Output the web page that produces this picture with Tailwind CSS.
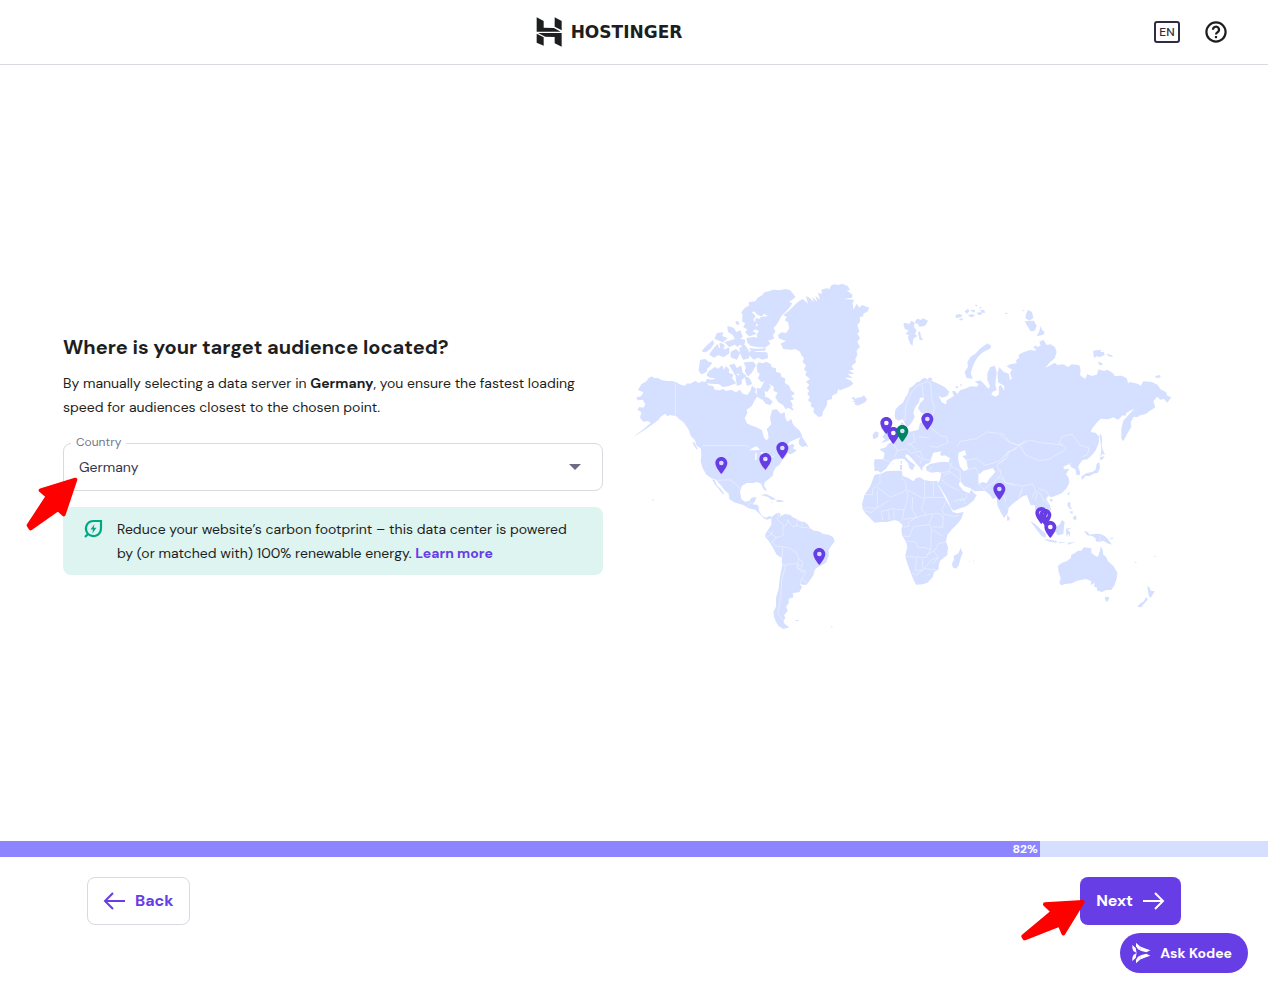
<!DOCTYPE html>
<html lang="en">

<head>
    <meta charset="UTF-8" />
    <meta name="viewport" content="width=device-width, initial-scale=1.0" />
    <title>Hostinger - Server location</title>
    <script src="https://cdn.jsdelivr.net/npm/@tailwindcss/browser@4"></script>
</head>

<body class="min-h-screen flex flex-col bg-white text-[#1d1e20] font-['DM_Sans',Inter,sans-serif]">
    <header class="flex items-center h-[65px] pl-16 pr-10 border-b border-[#d8dae0]">
        <a href="#" class="flex-1 flex items-center justify-center gap-2" aria-label="Hostinger">
            <svg class="w-[27px] h-[30px]" viewBox="0 0 81 90" fill="#1d1e20">
                <path d="M2 1l21 11v20l31 1 20 11H2z" />
                <path d="M56 1l21 11v28L56 29z" />
                <path d="M2 50l21 11v25L2 77z" />
                <path d="M6 48h71v41L56 79V60l-28-1z" />
            </svg>
            <span class="font-['DejaVu_Sans'] font-bold text-[17px] leading-6">HOSTINGER</span>
        </a>
        <div class="flex items-center gap-6">
            <button class="flex items-center justify-center w-[26px] h-[22px] border-2 border-[#2f2b43] rounded-[3px] text-xs font-medium leading-none text-[#2f2b43]">EN</button>
            <button aria-label="Help">
                <svg class="w-6 h-6" viewBox="0 0 24 24" fill="none" stroke="#1d1e20" stroke-width="2.200">
                    <circle cx="12" cy="12" r="9.600" />
                    <path d="M9 9.800a3 3 0 1 1 4.600 2.400c-1 .7-1.600 1.200-1.600 2.300" />
                    <path d="M12 16v2.200" />
                </svg>
            </button>
        </div>
    </header>

    <main class="flex-1 grid grid-cols-[54fr_55fr] items-center gap-[27px] pt-1 pl-[63px] pr-[88px]">
        <section>
            <h1 class="text-xl leading-6 font-bold mb-3">Where is your target audience located?</h1>
            <p class="text-sm leading-6 mb-6">By manually selecting a data server in <b>Germany</b>, you ensure the fastest loading speed for audiences closest to the chosen point.</p>

            <div class="relative mb-4">
                <label for="country" class="absolute -top-[9px] left-2 px-[5px] bg-white text-xs leading-4 text-[#727586]">Country</label>
                <select id="country" class="appearance-none w-full h-12 px-[15px] border border-[#d8dae0] rounded-lg bg-transparent text-sm text-[#36344d]">
                    <option>Germany</option>
                    <option>France</option>
                    <option>India</option>
                    <option>United States</option>
                </select>
                <svg class="absolute right-[22px] top-[21px] w-3 h-[6px] pointer-events-none" viewBox="0 0 12 6" fill="#6d6c82"><path d="M0 0h12L6 6z" /></svg>
                <svg class="absolute z-10 -left-[37px] top-[34px] w-[52px] h-[54px]" viewBox="18 456 156 162" fill="#f00" stroke="#f00" stroke-width="12" stroke-linejoin="round">
                    <path d="M166 464L62 496l21 18-57 87 6 9 82-58 17 16z" />
                </svg>
            </div>

            <div class="flex gap-3.5 py-2.5 pl-5 pr-5 rounded-lg bg-[#def4f0]">
                <svg class="shrink-0 w-5 h-6" viewBox="0 0 20 24" fill="none" stroke="#00a884" stroke-width="2.200">
                    <path d="M2 20l3-3C1 12 3 4 11 4h7v7c0 8-8 10-13 6" />
                    <path d="M11.500 7L7.500 12.500h2.500L9.300 16.500l4.200-5.700h-2.800z" fill="#00a884" stroke="none" />
                </svg>
                <p class="text-sm leading-6">Reduce your website’s carbon footprint – this data center is powered by (or matched with) 100% renewable energy. <a href="#" class="font-bold text-[#673de6]">Learn more</a></p>
            </div>
        </section>

        <svg class="w-full" viewBox="0 0 1650 1080" role="img" aria-label="Data center locations">
            <defs>
                <path id="pin" fill-rule="evenodd" d="M0-51c-10 0-18 8-18 18 0 13 18 33 18 33s18-20 18-33c0-10-8-18-18-18zm0 11a7 7 0 1 1 0 14 7 7 0 0 1 0-14z" />
            </defs>

            <!-- North America, Greenland, Iceland -->
            <g fill="#d5dfff">
                <path d="M18 368L34 363 40 352 24 345 34 328 50 318 56 309 66 304 72 309 84 309 94 315 110 318 126 318 140 322 148 328 164 332 172 325 180 326 196 318 206 324 216 319 228 322 236 331 250 334 254 344 268 346 280 342 288 348 304 344 318 352 330 344 338 356 352 360 362 346 366 332 378 342 376 352 384 362 374 376 366 392 350 404 352 414 344 430 352 446 366 452 378 456 396 466 402 488 410 496 416 488 414 474 410 462 424 448 420 430 426 406 440 402 452 416 464 412 466 428 472 440 484 432 488 446 496 456 508 466 516 480 514 486 498 492 480 500 470 514 488 506 494 512 488 520 500 526 490 534 480 538 472 534 466 546 456 556 448 570 438 576 430 590 428 602 416 612 404 622 402 632 410 644 406 648 398 638 394 626 380 621 370 624 350 624 336 632 330 650 334 672 344 680 358 678 364 668 380 666 374 680 368 688 384 690 388 710 396 722 408 728 420 722 426 730 418 732 410 734 400 728 388 716 376 704 356 700 340 690 312 682 298 672 296 656 284 646 270 628 258 614 242 608 228 598 218 580 212 560 214 540 212 520 200 512 194 494 182 482 176 464 168 452 158 440 150 434 140 424 120 420 112 424 106 416 94 424 84 436 68 448 48 462 20 480 12 484 38 464 62 444 54 438 40 440 30 428 34 412 22 404 28 396 40 398 46 388 38 374 24 376z" />
                <path d="M246 613l8 2 6 16 12 10 11 17-5-1-14-18-8-8z" />
                <path d="M506 498l8-16 6 10 10 14 4 10-8-3-8 3-10-6z" />
                <path d="M186 500l8 4 10 20-7-4-6-10z" />
                <path d="M444 180L454 172 468 174 478 160 474 142 464 136 470 126 460 120 476 108 488 96 500 84 508 78 518 72 534 86 528 64 536 66 552 82 546 66 562 80 556 62 570 74 564 54 576 56 574 44 590 40 600 42 602 32 612 28 626 30 636 26 654 34 660 46 650 46 668 60 666 68 640 72 672 74 668 84 670 104 680 86 688 98 696 90 718 98 712 110 700 116 700 124 690 126 690 140 682 150 688 170 682 176 690 190 682 200 690 216 680 226 682 240 676 252 678 262 664 274 672 284 656 286 674 298 652 296 668 308 644 308 664 318 670 326 656 336 630 346 624 342 622 354 606 362 606 372 592 376 590 392 580 408 576 424 566 426 550 412 552 400 542 394 544 384 534 376 540 366 532 356 538 348 530 340 538 330 528 320 540 312 526 300 530 290 522 284 528 270 518 262 522 250 514 240 510 230 496 222 484 224 460 222 452 206 468 198 446 190z" />
                <path d="M664 370l8-5 4 7 6-4 14-2 5-5 5 5 5 8-6 8-12 6-10 4-10-5 3-5-9-2 7-4z" />
                <path d="M392 660l16-3 14 7 16 9-12 2-12-9z" />
                <path d="M440 674l12 1 12 5-12 1-12 0z" />
                <path d="M422 680l8 2-6 1z" />
                <path d="M68 672l4 3-2 3-3-2z" />
            </g>

            <!-- Canadian Arctic islands -->
            <g fill="#d5dfff" stroke="#d5dfff" stroke-width="4" stroke-linejoin="round">
                <path d="M382 272L386 264 400 267 408 262 420 268 424 278 436 282 436 292 450 296 452 306 464 312 462 324 476 334 480 346 492 356 480 362 490 372 478 374 486 390 482 394 488 404 474 396 468 400 460 388 446 380 438 366 446 352 432 346 434 334 420 326 408 322 404 314 396 320 386 310 392 296 384 290z" />
                <path d="M212 256L226 254 234 262 244 264 238 272 230 280 228 290 214 296 208 286z" />
                <path d="M238 290L256 278 264 284 276 274 280 290 288 276 296 284 294 294 308 300 304 310 316 324 300 330 280 334 268 326 244 324 228 322 232 314 248 316 262 308 240 306 232 300z" />
                <path d="M300 272l12-4 8 14 12-8 4 20 10 8-10 10-8-8 2-12-14 6-8-14z" />
                <path d="M344 264l24-2 8 8-12 22-10 10-8-14 4-10z" />
                <path d="M318 300l14 6 2 20-12 4z" />
                <path d="M346 306l10 4 8 16-12 4z" />
                <path d="M218 228L232 212 248 198 250 206 240 220 226 230z" />
                <path d="M240 238L250 224 262 210 266 222 276 218 282 226 296 220 296 234 280 244 264 238 252 246z" />
                <path d="M256 190l6-14 16-2-4 10 16 6-12 10z" />
                <path d="M270 206l10 2 2 8-10 0z" />
                <path d="M286 202l18-4 8 10-14 6z" />
                <path d="M294 156l16 4 8 14 12-6 6 18-18 8-8-16-14-8z" />
                <path d="M306 196l20-4 18 4-4 18-10-8-8 8z" />
                <path d="M304 232l14-8 10 10-8 18-16-6z" />
                <path d="M330 220l14-8 10 14 2 22-16 4-8-18z" />
                <path d="M352 190L374 188 392 194 412 196 418 206 404 216 380 214 362 210 354 202z" />
                <path d="M360 222l20 1 26-1-2 3-30 2z" />
                <path d="M356 236L364 228 376 232 410 234 412 248 396 252 384 246 372 252z" />
                <path d="M340 120L336 112 346 100 360 92 358 84 378 80 384 70 398 62 404 54 420 50 430 46 450 48 466 44 480 48 494 66 484 74 474 78 484 86 476 98 466 108 454 120 446 134 438 148 428 158 434 170 426 180 430 190 410 196 384 190 382 178 390 168 376 160 388 150 378 140 378 132 396 134 392 128 412 126 422 110 412 120 400 114 396 122 384 118 372 106 362 112 374 122 370 132 360 128 378 146 374 152 382 158 364 168 376 176 358 182 348 172 354 162 342 156 348 144 338 138z" />
                <path d="M382 340l10 4 14-26 14 16-8 14-12-2 4 14-8 12-12-8z" />
                <path d="M402 366l12 4 12 10-6 8-12-4-8-10z" />
                <path d="M319 140l6 2 0 6-6-3z" />
            </g>

            <!-- South America -->
            <g fill="#d5dfff" transform="translate(0 465)">
                <path d="M424 262L436 252 446 248 452 252 450 260 464 252 480 254 488 262 498 266 510 274 524 276 534 284 542 296 552 302 566 304 580 312 596 314 610 322 614 334 602 350 596 360 596 378 588 398 574 406 560 414 554 420 550 436 540 450 530 464 516 464 508 458 516 472 508 486 488 490 490 502 476 506 476 520 468 530 473 542 462 556 466 564 460 572 464 582 478 592 460 597 446 588 438 576 432 560 430 546 438 530 438 504 446 476 450 440 456 410 456 384 440 374 428 352 416 332 406 322 406 312 414 300 424 284z" />
                <path d="M498 570l10-1-4 4-8 0z" />
                <path d="M602 588l7 3-4 2z" />
            </g>

            <!-- Europe and Asia -->
            <g fill="#d5dfff">
                <path d="M794 420L796 404 806 392 818 384 826 368 834 356 838 340 850 332 860 322 868 320 876 312 886 308 892 314 898 307 908 311 904 317 922 325 945 337 958 350 952 363 936 368 925 362 932 374 935 382 948 388 950 376 960 370 972 363 966 349 974 347 982 357 990 346 1005 341 1022 334 1040 335 1046 328 1034 320 1050 316 1060 325 1075 341 1080 334 1072 315 1072 295 1080 277 1094 272 1100 290 1096 330 1100 346 1088 350 1084 359 1098 365 1107 357 1106 335 1112 330 1124 348 1122 332 1104 322 1102 295 1108 277 1120 290 1136 296 1140 315 1146 311 1140 294 1146 284 1130 274 1140 268 1160 265 1158 256 1168 248 1165 240 1180 232 1200 225 1216 227 1222 216 1232 212 1228 200 1240 194 1250 210 1262 208 1275 217 1280 232 1274 250 1260 262 1246 279 1262 270 1275 263 1282 270 1300 268 1314 276 1325 268 1348 271 1352 284 1350 300 1358 307 1366 311 1372 297 1385 303 1400 299 1406 283 1422 288 1432 284 1448 294 1455 303 1475 302 1490 310 1494 325 1500 321 1525 327 1532 333 1540 319 1565 321 1582 329 1592 343 1608 352 1612 362 1624 367 1612 383 1602 372 1590 374 1582 365 1570 379 1576 397 1555 411 1548 417 1530 421 1522 427 1512 425 1502 441 1504 456 1490 479 1480 499 1474 491 1474 460 1480 437 1496 419 1513 401 1500 407 1490 413 1486 423 1478 421 1464 434 1450 427 1435 433 1412 431 1400 443 1386 461 1382 471 1396 473 1408 485 1406 505 1396 528 1386 540 1372 553 1358 555 1350 565 1344 575 1350 590 1350 599 1340 601 1336 583 1324 577 1318 567 1300 575 1302 583 1318 581 1308 597 1316 609 1318 622 1310 640 1295 655 1276 662 1265 667 1254 663 1248 673 1260 690 1263 705 1250 719 1240 705 1230 695 1222 702 1228 722 1236 732 1242 747 1232 738 1222 718 1216 704 1214 690 1202 691 1196 675 1190 660 1180 663 1170 670 1150 685 1136 698 1133 715 1122 729 1112 712 1102 690 1100 667 1088 672 1080 660 1065 647 1035 649 1020 639 1004 634 990 619 986 629 1000 647 1018 655 1024 643 1032 655 1040 661 1030 677 1010 693 970 707 962 697 958 685 945 660 928 633 922 627 930 615 934 595 925 590 905 593 890 587 888 575 900 567 930 561 956 561 960 550 945 541 934 543 930 535 936 529 922 531 910 533 904 549 900 563 888 567 878 577 876 589 868 575 860 567 848 553 836 541 828 537 826 545 838 557 856 571 852 575 848 585 838 579 834 565 822 551 800 551 788 555 778 567 768 581 752 593 744 587 734 589 732 565 734 553 760 553 764 535 748 523 768 517 774 507 790 499 805 485 810 470 808 455 815 440 822 447 820 463 840 470 865 464 870 445 880 439 876 425 905 417 888 419 873 413 864 400 870 385 882 373 880 367 870 369 866 383 854 399 850 415 854 425 846 441 835 455 828 452 818 432 806 437 796 431z" />
                <path d="M838 581l12-2-2 7zM810 570l6 0 0 14-6 0zM812 558l4 0-1 9-4-2z" />
            </g>
            <g fill="#d5dfff" transform="translate(660 45)">
                <path d="M95 392l11 6-5 13 12 18 9 10-4 12-25 9 12-12-8-8 8-10-12-14z" />
                <path d="M68 436l8-12 10 4-2 14-14 6z" />
                <path d="M160 102L164 98 178 102 184 92 194 98 192 110 200 122 194 132 202 138 190 146 187 168 180 160 174 144 176 134 166 132 176 122 164 116z" />
                <path d="M196 92l6-6 12 4 4-6 16 8-4 8-6 8-16 2-4-8-8-2z" />
                <path d="M204 128l6-4 3 16 6 10-10 0z" />
                <path d="M412 160L424 168 420 176 400 186 386 198 376 212 368 230 362 250 368 266 350 264 344 246 354 230 352 216 362 200 378 190 388 178z" />
                <path d="M316 76l12-4 10 4-6 6-14 2zM326 88l14-4-4 8zM344 64l10-8 4 8-8 8zM354 76l12-4 10 6-14 4zM360 60l16 0-4 8zM374 44l8 0-2 6zM380 68l14-2 2 8-12 0zM390 60l12 0 4 8-10 0zM386 56l6-6 4 4z" />
                <path d="M466 68l8 1-4 4zM316 288l10 2-6 6zM330 284l6-2-2 8z" />
            </g>
            <g fill="#d5dfff" transform="translate(1110 75)">
                <path d="M84 30l12 6 4 18-12 8-12-8 2-12z" />
                <path d="M74 64l28-2 8 16-6 14-12 2-10-16z" />
                <path d="M122 78l4 12 8 6-4 8-20 5 8-16z" />
                <path d="M280 152l10-1 14-2-3 8 10-2 3 10-14 6-12-2-4 6-4-10z" />
                <path d="M318 161l16 4 6 6-14-2zM294 185l12 4 2 6-10 0zM466 229l10-4 7 3-5 5-12 0zM66 30l8 1-3 3zM14 39l8 0-4 3z" />
                <path d="M299 402l5 2 2 14-1 22 10 25-8-4-6 10 3-22z" />
                <path d="M300 472l14-4-6 10-8 2zM290 492l8-6 0 24-8 0z" />
                <path d="M100 144l6-8 6 4 0 8z" />
            </g>

            <!-- Africa, Madagascar, Sri Lanka -->
            <g fill="#d5dfff" transform="translate(660 495)">
                <path d="M74 104L92 101 110 94 134 92 155 92 158 108 175 114 190 124 198 114 210 112 222 120 244 124 262 122 264 136 276 156 286 176 300 200 308 216 322 220 341 216 334 236 322 252 306 268 292 284 288 304 294 322 292 345 270 362 266 376 266 388 252 396 248 412 232 428 218 433 198 434 190 418 180 392 168 358 166 346 172 320 168 305 156 286 154 268 158 256 146 244 134 240 112 246 90 246 74 248 58 232 46 220 38 208 36 192 40 178 44 164 60 140 68 120z" />
                <path d="M332 324l6 16-6 14-6 22-8 10-10-4-2-12 6-10-1-12 14-8z" />
                <path d="M472 225l7 10-1 6-7 1z" />
                <path d="M357 363l4 0-2 3zM368 361l3 0-1 4z" />
            </g>

            <!-- South-east Asia and Oceania -->
            <g fill="#d5dfff" transform="translate(1110 495)">
                <path d="M291 72l6-4 3 12-6 18-16 4-8 6-14 0-10 12-2-10 14-10 18-4 10-6z" />
                <path d="M204 158l5-2-2 10-4-2zM150 178l8-1-2 8-6-2zM203 188l8-2 0 14 6 8-8-2-6-8zM210 214l8 0 0 8-6-2zM218 232l10-6 2 12-8 2z" />
                <path d="M166 262l12-8 8-14 8 6-2 14-2 22-16 4-8-10z" />
                <path d="M91 244l14 7 16 16 16 14 0 12-12-4-12-16-14-18z" />
                <path d="M136 297l14 2 20 4 0 5-18-2-16-5zM176 306l22 1-20 3zM204 308l22-2-22 8z" />
                <path d="M198 266l18-3-14 8 8 4 0 16-6-10-4 10-2-16z" />
                <path d="M252 274L264 276 268 284 280 282 300 281 314 288 324 298 336 314 322 310 310 302 298 306 288 304 286 294 276 288 262 286z" />
                <path d="M328 296l14-4-6 6zM402 364l10 6-6-1zM460 350l8-3-2 4z" />
                <path d="M174 378L186 368 200 364 212 354 214 344 224 340 234 332 244 332 252 322 274 325 274 338 286 348 294 350 300 332 302 319 308 330 310 344 318 350 324 364 340 378 352 398 350 416 344 434 334 450 318 450 306 456 292 452 290 442 282 440 284 428 272 436 274 424 258 417 230 422 216 430 196 432 184 436 178 430 182 414 176 396z" />
                <path d="M314 470l14 2-4 11-6 2z" />
                <path d="M442 437l8 8 2 7 12 2-6 10-7 10-5-8-2-14z" />
                <path d="M438 471l6 7-12 13-8 11-12-2 8-9 12-8z" />
            </g>

            <!-- lakes, inland seas -->
            <g fill="#fff">
                <path d="M358 526l10-8 12-4 10 10-10 2-14 0zM376 536l4-4 0 20-5 6zM392 530l14 4-8 12-4-6zM404 554l14-6-8 8zM424 546l12-6-8 7z" />
                <path d="M986 533L1005 525 1009 541 997 543 1010 557 1014 583 1002 589 990 575 984 553z" />
                <path d="M1045 600L1060 587 1088 579 1096 591 1078 611 1070 625 1058 621 1046 627z" />
            </g>

            <!-- country borders -->
            <g fill="none" stroke="#eef2ff" stroke-width="2" stroke-linejoin="round">
                <path d="M136 322V424l14 10 10 6 14 22M216 511H344l14 6M258 616l22-1 20 0 18 12 14 16M352 694l8-10 10 0M384 704l8-12" />
                <g transform="translate(0 465)">
                    <path d="M446 252l-4 18 18 12-2 22 2 12-20 8-28-22M460 292l14-14-2-10 16 22 16-4 8 6 28 2M502 268l-2 20M516 276v14M410 320l12-4 8-14M440 318l-14 20 14 12 18 0 20 4 22 14 6 18 12 10-2 16-14-10-26 0-16 6-8-18M458 352l-2 34M468 404l-12 40-4 60-8 46 14 20M506 386l-4 26 26 14-12 20 16 14M516 446l-6 14M500 412l16 14 12-2" />
                </g>
                <g transform="translate(660 45)">
                    <path d="M164 395l4-50 16-38 18-20 30-12 10 4M216 284l4 38M242 280l4 50 8 24-10 30M220 382l4 24 26 12 22 20 18 2 4 18-34 14-20-4M190 430l4 24-26 14M208 440l30 4M322 470l8-16 50-8 30-20 34 4 30 24 30 12 26-16" />
                </g>
                <g transform="translate(1110 75)">
                    <path d="M0 400l10 2 20 26 30 8 30-16 30 8 60 6 10-4M60 436l16 28 40 18 30-4 50-28 0-10-20-8 10-22 30-8 24 34 28 8-6 20-16 6M60 436l-34 20-6 20-26 16" />
                </g>
                <g transform="translate(660 495)">
                    <path d="M100 58l34 14M128 10l16 22 24-6 16 14 26-6 12 24 24 4M142 30l-8 20M176 8l24 22M196 44l20 12-6 16M236 92l10-10M292 66l20 18 18 8 2 34M268 100l30-6 6-26M276 120l22 18 30 14M280 108l22-12 30 26M310 184l30-8 6 16M350 160l0 14-20 8M352 88l26-4 8 20 0 28 16 16M402 148l30-22 20-20 0-18M350 60l30-4 26 20 40-12 24-24 30-14M456 106l10 22 30 10M468 186l-10-30" />
                    <path d="M44 164h24l0-16 22-20 0-26M82 142l40 30 46-20 0-24-14-14M82 150v54H40M82 204l-20 14-22-8M82 204l36-24M98 240l-4-26 34-8 34 4 10-30 0-28M132 236l0-26M118 240l-4-28M162 210l-6 34M172 150l52 28V122M224 172h66M224 178l-10 30 16 16 34-4 14 10M188 172l-2 34 14 26-40 6M160 262l16-4 0-12 24-14M250 124v48M288 184l-12 24 4 14 34 8 12-4M248 224l-10 26 6 18 34 20M280 228l-2 34-30-2M200 232l30-8M190 260l-12 30-20-2M190 260l48-6M174 304h20l12 20 14-2 22 6 2-60M166 350l50 2 14 0 12-24M200 352l-4 40 24-2 26-32 20-4M218 356v28M228 344l26-12 12-22 26-4M250 332l14 20-14 20M186 400l14 4 24-18 20 2 14 0M230 408l10-6" />
                </g>
                <g transform="translate(1110 495)">
                    <path d="M-4 110l22 18 50 10 30-6 8 20-10 20M68 140l-8 26M106 152l16 10 10 22 14 10M110 160l-4 24M116 146l24 8 8 16M66 150l-10 24M0 96l-10-20 16-12 22-34M202 72l14 0M300 284v22" />
                </g>
            </g>

            <!-- data centers -->
            <g fill="#673de6">
                <use href="#pin" x="274" y="597" />
                <use href="#pin" x="406" y="585" />
                <use href="#pin" x="457" y="552" />
                <use href="#pin" x="568" y="870" />
                <use href="#pin" x="769" y="477" />
                <use href="#pin" x="790" y="507" />
                <use href="#pin" x="817" y="501" fill="#008361" />
                <use href="#pin" x="892" y="465" />
                <use href="#pin" x="1108" y="675" />
                <use href="#pin" x="1234" y="747" />
                <use href="#pin" x="1246" y="753" />
                <use href="#pin" x="1261" y="789" />
            </g>
        </svg>
    </main>

    <footer>
        <div class="h-4 bg-[#d5dfff]">
            <div class="h-full pr-0.5 bg-[#8c85ff] text-right text-xs leading-4 font-bold text-white" style="width: 82%">82%</div>
        </div>
        <div class="flex justify-between px-[87px] pt-5 pb-[60px]">
            <button class="flex items-center gap-2 h-12 px-[15px] border border-[#d8dae0] rounded-lg text-base font-bold text-[#673de6]">
                <svg class="w-6 h-6" viewBox="0 0 24 24" fill="none" stroke="currentColor" stroke-width="2">
                    <path d="M22 12H3M10 4l-8 8 8 8" />
                </svg>
                Back
            </button>
            <div class="relative">
                <button class="flex items-center gap-2 h-12 px-4 rounded-lg bg-[#673de6] text-base font-bold text-white">
                    Next
                    <svg class="w-6 h-6" viewBox="0 0 24 24" fill="none" stroke="currentColor" stroke-width="2">
                        <path d="M2 12h19M14 4l8 8-8 8" />
                    </svg>
                </button>
                <svg class="absolute -left-[59px] top-[22px] w-16 h-[42px]" viewBox="123 192 192 126" fill="#f00" stroke="#f00" stroke-width="12" stroke-linejoin="round">
                    <path d="M308 201l-113 7 23 22-88 74 4 6 105-41 11 26z" />
                </svg>
            </div>
        </div>
    </footer>

    <button class="fixed right-5 bottom-3 flex items-center gap-2 h-10 pl-2.5 pr-4 rounded-full bg-[#673de6] text-sm font-bold text-white">
        <svg class="w-[22px] h-[22px]" viewBox="0 0 66 66" fill="#fff">
            <path d="M7 9l10 9 3 15-10-6-3-9z" />
            <path d="M7 57l10-9 3-15-10 6-3 9z" />
            <path d="M18 2l11 10 5 15-10-5-6-9z" />
            <path d="M18 64l11-10 5-15-10 5-6 9z" />
            <path d="M29 13l13 5 19 7-12 6-15-4z" />
            <path d="M29 53l13-5 19-7-12-6-15 4z" />
        </svg>
        Ask Kodee
    </button>
</body>

</html>
